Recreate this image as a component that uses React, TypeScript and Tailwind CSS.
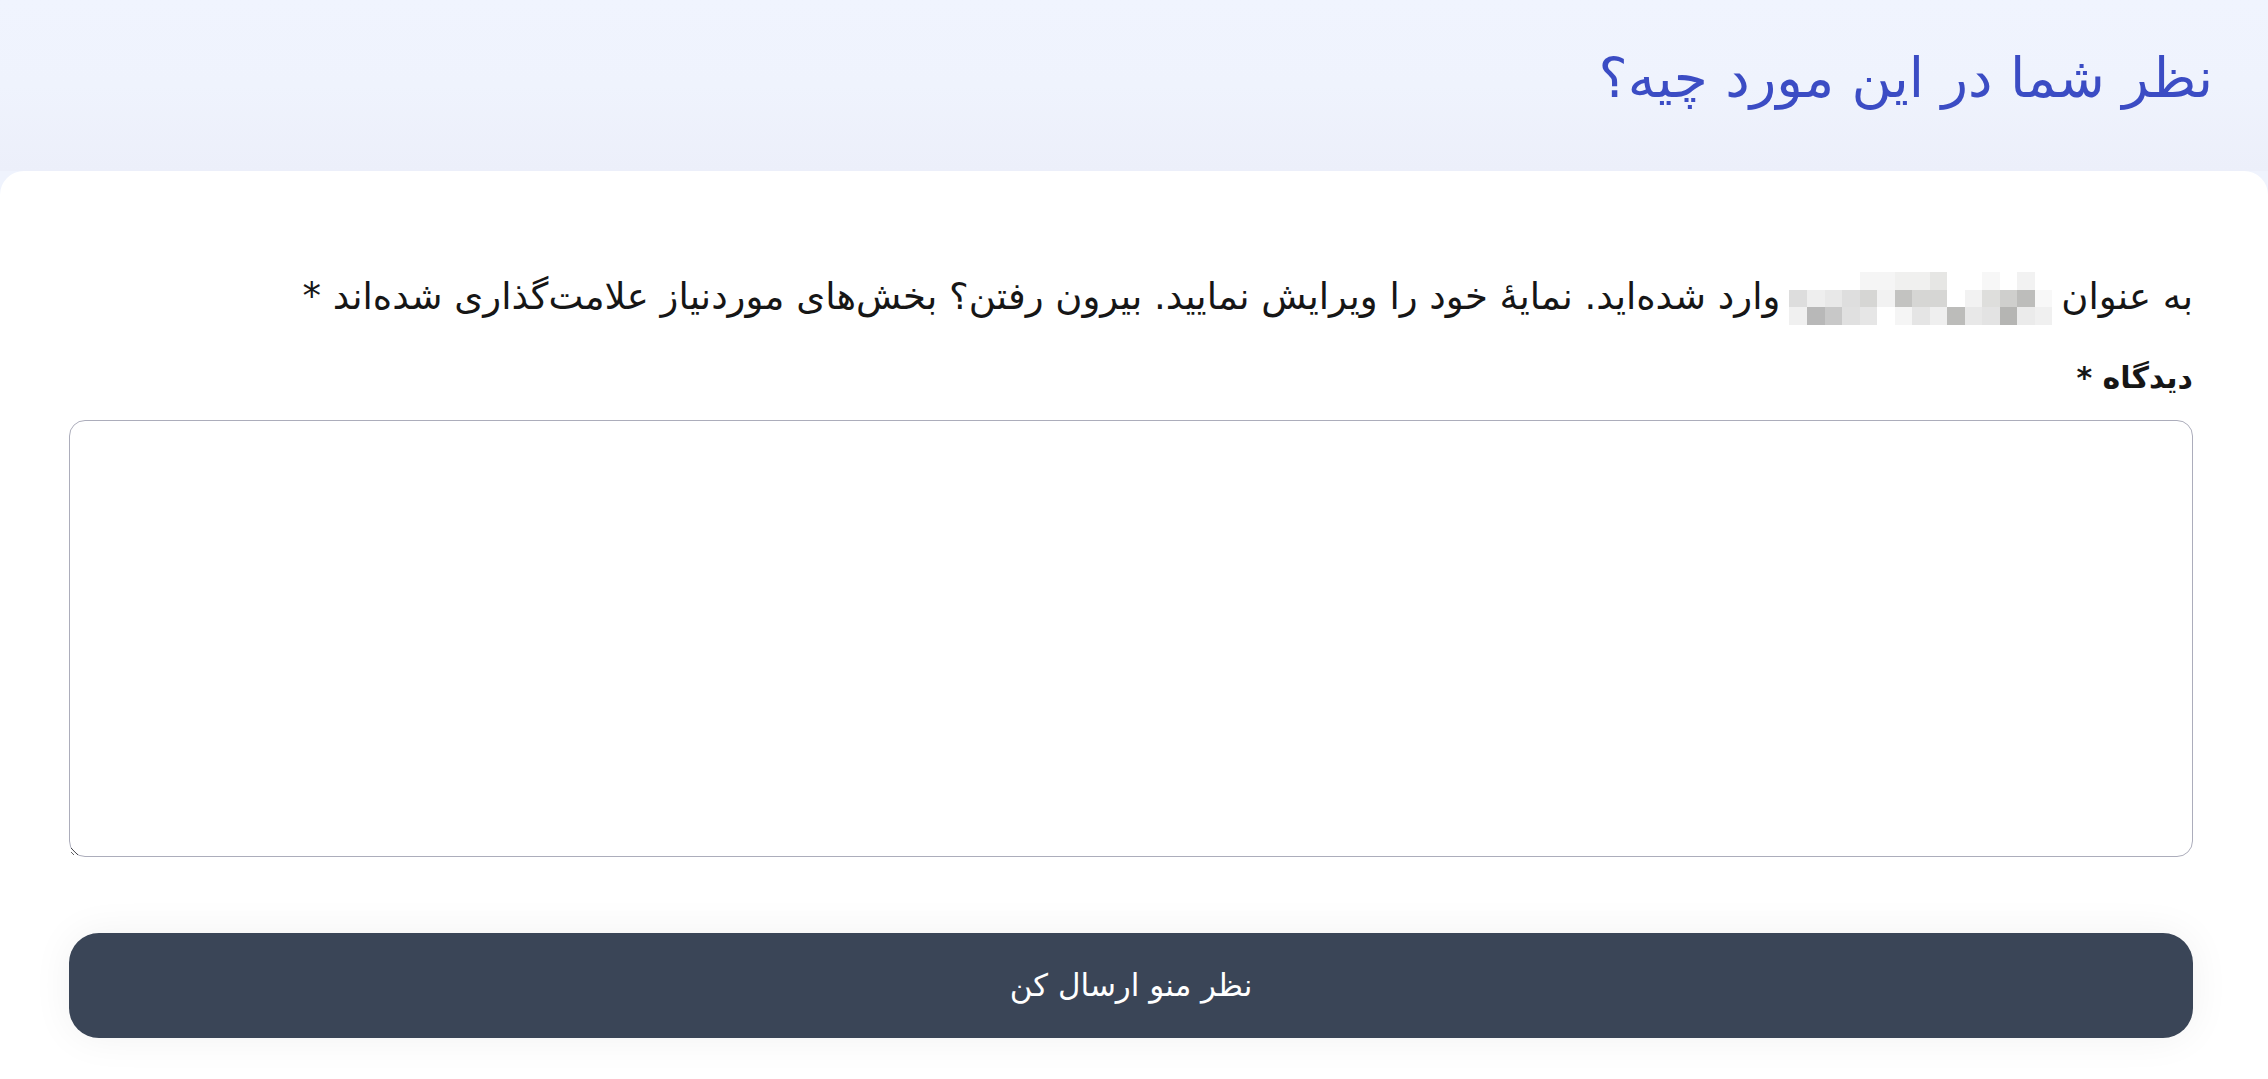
import React from "react";

// pixelated (blurred) user name
const blurCells: string[][] = [
  ["#ffffff", "#f2f2f2", "#ffffff", "#f7f7f7", "#ffffff", "#ffffff", "#e6e6e4", "#f0f0ef", "#f0f0ef", "#f5f5f5", "#f5f5f5", "#ffffff", "#ffffff", "#ffffff", "#ffffff"],
  ["#f8f8f8", "#bdbdbb", "#cfcfcd", "#dededc", "#f2f2f2", "#ffffff", "#d6d6d4", "#d6d6d4", "#c3c3c1", "#f2f2f2", "#d6d6d4", "#dedede", "#e8e8e8", "#eeeeee", "#dddddd"],
  ["#f0f0f0", "#ebebeb", "#b5b5b3", "#e3e3e3", "#e8e8e8", "#bcbcba", "#efefef", "#e5e5e5", "#f5f5f5", "#ffffff", "#e6e6e6", "#e0e0e0", "#c8c8c8", "#b8b8b8", "#f0f0f0"],
];

function BlurredName() {
  const cw = 263 / 15;
  const ch = 53 / 3;
  return (
    <svg
      width="263"
      height="53"
      viewBox="0 0 263 53"
      className="inline-block align-middle mx-[9px]"
      shapeRendering="crispEdges"
    >
      {blurCells.map((row, r) =>
        row.map((c, i) => (
          <rect key={`${r}-${i}`} x={263 - (i + 1) * cw} y={r * ch} width={cw + 0.5} height={ch + 0.5} fill={c} />
        )),
      )}
    </svg>
  );
}

export default function App() {
  return (
    <div
      dir="rtl"
      className="flex flex-col h-[1079px] bg-[#eff3fd] overflow-hidden font-['DejaVu_Sans',sans-serif]"
    >
      <header className="h-[171px] shrink-0 flex items-center pr-[55px] pb-[14px] bg-linear-to-b from-[#f0f4fe] via-[#eff3fd] to-[#eceffa]">
        <h2 className="text-[55px] leading-none font-normal text-[#3b4cc4]">نظر شما در این مورد چیه؟</h2>
      </header>

      <main className="flex-1 bg-white rounded-t-[24px] pl-[69px] pr-[75px] pt-[101px]">
        <form className="flex flex-col">
          <p className="text-[37px] leading-[48px] text-[#161616] whitespace-nowrap">
            به عنوان
            <BlurredName />
            وارد شده‌اید. نمایهٔ خود را ویرایش نمایید. بیرون رفتن؟ بخش‌های موردنیاز علامت‌گذاری شده‌اند *
          </p>

          <label className="mt-[29px] text-[30px] leading-[48px] font-bold text-[#161616]">دیدگاه *</label>

          <textarea className="mt-[18px] h-[437px] w-full resize-y rounded-[16px] border-[1.5px] border-[#acadbb] bg-white outline-none" />

          <button
            type="button"
            className="mt-[76px] h-[105px] w-full rounded-[30px] bg-[#3a4557] text-[31px] text-white shadow-[0_0_40px_rgba(0,0,0,0.06)]"
          >
            نظر منو ارسال کن
          </button>
        </form>
      </main>
    </div>
  );
}
